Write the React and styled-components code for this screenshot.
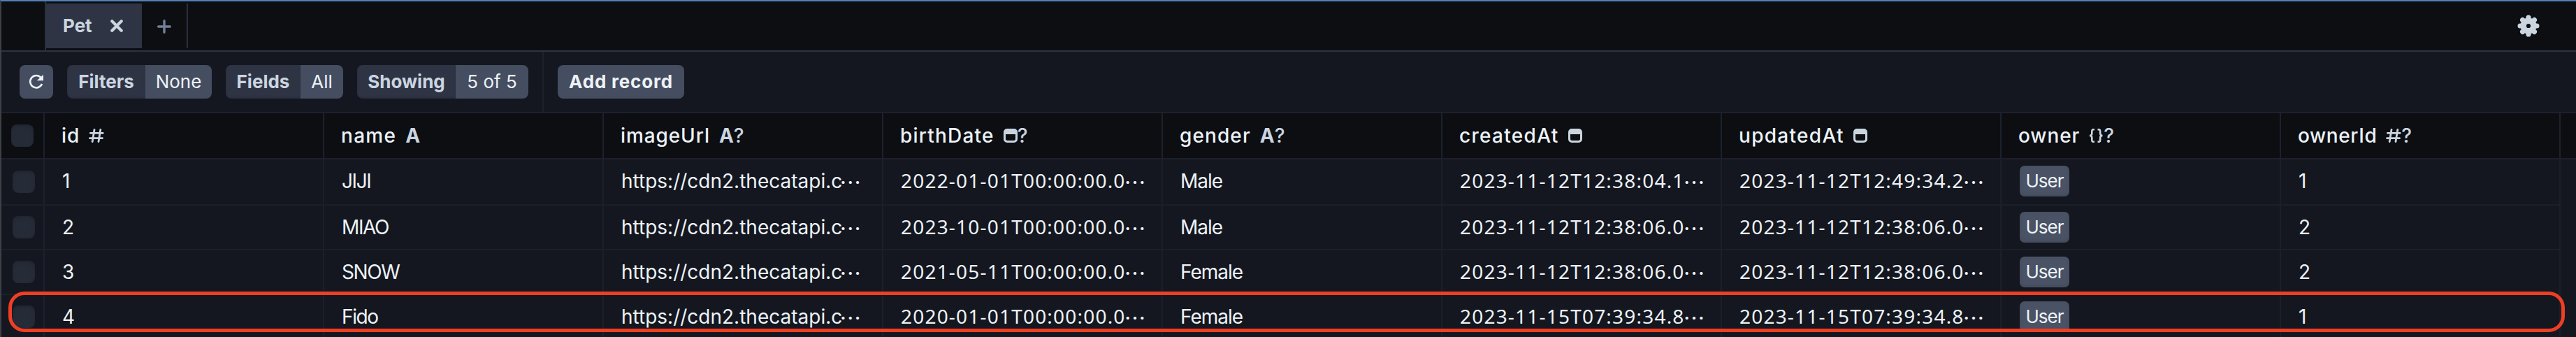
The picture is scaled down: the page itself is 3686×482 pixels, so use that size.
import React from "react";
import styled, { createGlobalStyle } from "styled-components";

const GlobalStyle = createGlobalStyle`
  * { box-sizing: border-box; }
  body { margin: 0; background: #14171f; overflow: hidden; }
`;

const Frame = styled.div`
  position: relative;
  width: 3686px;
  height: 482px;
  display: flex;
  flex-direction: column;
  overflow: hidden;
  background: #14171f;
  border-top: 2px solid #5580b8;
  border-left: 2px solid #3d4046;
  color: #edf2f7;
  font: 400 28px/1 Inter, "Noto Sans CJK JP", sans-serif;
  white-space: nowrap;
`;

const TabBar = styled.header`
  display: flex;
  flex: none;
  align-items: center;
  height: 72px;
  padding: 0 52px 0 62px;
  background: #0c0e12;
  border-bottom: 2px solid #2d3345;
`;

const TabList = styled.nav`
  display: flex;
  align-items: center;
  align-self: stretch;
  margin-right: auto;
  border-left: 2px solid #2b303e;
`;

const Tab = styled.div`
  display: flex;
  align-items: center;
  justify-content: space-between;
  width: 137px;
  height: 64px;
  padding: 0 27px 0 24px;
  background: #2e3444;
  color: #cbd5e0;
  font-size: 26px;
  font-weight: 700;
`;

const NewTab = styled.div`
  display: grid;
  place-items: center start;
  width: 66px;
  height: 64px;
  padding-left: 22px;
  padding-top: 2px;
  color: #718096;
  border-right: 2px solid #2b303e;
`;

const Toolbar = styled.div`
  display: flex;
  flex: none;
  height: 88px;
  border-bottom: 2px solid #1c212c;
`;

const ToolGroup = styled.div`
  display: flex;
  align-items: center;
  gap: 20px;
  padding: 0 20px 0 ${(p) => p.$inset || 20}px;
  border-right: ${(p) => (p.$divided ? "2px solid #1c212c" : "0")};
`;

const Button = styled.button`
  display: flex;
  align-items: center;
  justify-content: center;
  width: ${(p) => p.$width}px;
  height: 48px;
  padding: 0;
  border: 0;
  border-radius: 8px;
  background: #454d60;
  box-shadow: inset 0 -2px 3px rgba(74, 85, 104, 0.35);
  color: #edf2f7;
  font: 700 26px/1 Inter, sans-serif;
  letter-spacing: 0.8px;
`;

const Split = styled.div`
  display: flex;
  height: 48px;
  border-radius: 8px;
  overflow: hidden;
  font-size: 26px;
`;

const SplitLabel = styled.span`
  display: grid;
  place-items: center;
  width: ${(p) => p.$width}px;
  background: #2e3444;
  box-shadow: inset 0 -2px 3px rgba(26, 32, 44, 0.25);
  color: #cbd5e0;
  font-weight: 700;
`;

const SplitValue = styled.span`
  display: grid;
  place-items: center;
  width: ${(p) => p.$width}px;
  background: #454d60;
`;

const Table = styled.div`
  display: flex;
  flex-direction: column;
  flex: none;
`;

const HeaderRow = styled.div`
  display: flex;
  height: 66px;
  background: #0c0e12;
  border-bottom: 2px solid #1c212c;
`;

const BodyRow = styled.div`
  display: flex;
  width: 3662px;
  height: ${(p) => (p.$first ? 66 : 64)}px;
  border-bottom: 2px solid #1b1f2a;
`;

const CheckCell = styled.div`
  display: flex;
  flex: none;
  align-items: center;
  width: 62px;
  padding-left: ${(p) => p.$inset}px;
  border-right: 2px solid #1b202b;
`;

const Checkbox = styled.span`
  width: 32px;
  height: 32px;
  border-radius: 8px;
  background: #262b38;
  box-shadow: inset 0 2px 4px rgba(20, 23, 31, 0.35);
`;

const HeadCell = styled.div`
  display: flex;
  flex: none;
  align-items: center;
  gap: 13px;
  width: 400px;
  padding-left: 24px;
  border-right: 2px solid #1b222c;
  font-weight: 500;
`;

const HeadName = styled.span`
  letter-spacing: ${(p) => p.$track}px;
`;

const TypeMark = styled.span`
  display: flex;
  align-items: center;
  color: #cbd5e0;
`;

const Letter = styled.b`
  font-weight: 700;
`;

const Cell = styled.div`
  display: flex;
  flex: none;
  align-items: center;
  width: 400px;
  padding: 0 0 ${(p) => (p.$first ? 2 : 0)}px ${(p) => (p.$badge ? 26 : 25)}px;
  border-right: 2px solid #1b1f29;
`;

const CellText = styled.span`
  letter-spacing: ${(p) => p.$track}px;
`;

const DateText = styled.span`
  padding-bottom: 2px;
  font-family: "Noto Sans", sans-serif;
  letter-spacing: 1.200px;
`;

const Ellipsis = styled.span`
  width: 28px;
  margin-left: ${(p) => (p.$tight ? -4 : -2)}px;
  font: 400 31px/1 "Noto Sans CJK JP", sans-serif;
  line-height: 0;
`;

const Badge = styled.span`
  display: grid;
  place-items: center;
  width: 71px;
  height: 44px;
  border-radius: 7px;
  background: #4a5365;
  box-shadow: inset 0 -2px 4px rgba(60, 66, 80, 0.6);
  font-size: 26px;
  letter-spacing: -1px;
`;

const Highlight = styled.div`
  position: absolute;
  left: 10px;
  top: 415px;
  width: 3658px;
  height: 58px;
  border: 5px solid #ee3f24;
  border-radius: 23px;
`;

const HashIcon = () => (
  <svg width="22" height="20" viewBox="0 0 22 20" fill="none" stroke="currentColor" strokeWidth="2.8" strokeLinecap="round">
    <path d="M8 1.5 5.2 18.5M16.8 1.5 14 18.5M2.3 6.3h18M1.5 13.7h18" />
  </svg>
);

const CalendarIcon = () => (
  <svg width="20" height="20" viewBox="0 0 20 20">
    <path fill="currentColor" fillRule="evenodd" d="M5 0h10a5 5 0 0 1 5 5v10a5 5 0 0 1-5 5H5a5 5 0 0 1-5-5V5a5 5 0 0 1 5-5ZM3 8v6.5A2.5 2.5 0 0 0 5.500 17h9a2.500 2.500 0 0 0 2.500-2.500V8Z" />
  </svg>
);

const BracesIcon = () => (
  <svg width="21" height="20" viewBox="0 0 21 20" fill="none" stroke="currentColor" strokeWidth="2.600">
    <path d="M8 1.200H6.500Q4.300 1.200 4.300 3.500V7Q4.300 10 1 10 4.300 10 4.300 13v3.500Q4.300 18.800 6.500 18.800H8M12.500 1.200H14Q16.200 1.200 16.200 3.500V7Q16.200 10 19.500 10 16.200 10 16.200 13v3.500Q16.200 18.800 14 18.800H12.500" />
  </svg>
);

const CloseIcon = () => (
  <svg width="18" height="18" viewBox="0 0 18 18" stroke="currentColor" strokeWidth="4.200" strokeLinecap="round">
    <path d="M2.300 2.300 15.700 15.700M15.700 2.300 2.300 15.700" />
  </svg>
);

const PlusIcon = () => (
  <svg width="20" height="20" viewBox="0 0 20 20" stroke="currentColor" strokeWidth="3.400" strokeLinecap="round">
    <path d="M10 1.700V18.300M1.700 10H18.300" />
  </svg>
);

const RefreshIcon = () => (
  <svg width="22" height="22" viewBox="0 0 22 22" fill="none">
    <path d="M17.600 5.200A8.700 8.700 0 1 0 19 14" stroke="currentColor" strokeWidth="2.600" />
    <path d="M21 .800V9.200H11.800Z" fill="currentColor" />
  </svg>
);

const PETALS = [0, 45, 90, 135, 180, 225, 270, 315];

const GearIcon = () => (
  <svg width="32" height="32" viewBox="-16 -16 32 32" fill="#cbd5e0">
    <path fillRule="evenodd" d="M-11.500 0a11.500 11.500 0 1 0 23 0a11.500 11.500 0 1 0-23 0ZM-3.100 0a3.100 3.100 0 1 0 6.200 0a3.100 3.100 0 1 0-6.200 0Z" />
    {PETALS.map((angle) => (
      <rect key={angle} x="-3.600" y="-15.500" width="7.200" height="8" rx="3.600" transform={`rotate(${angle})`} />
    ))}
  </svg>
);

const MARKS = {
  number: <HashIcon />,
  string: <Letter>A</Letter>,
  date: <CalendarIcon />,
  object: <BracesIcon />,
};

const COLUMNS = [
  { name: "id", type: "number", track: 1 },
  { name: "name", type: "string", track: 1.3 },
  { name: "imageUrl", type: "string", optional: true, track: 0.9 },
  { name: "birthDate", type: "date", optional: true, track: 1.2 },
  { name: "gender", type: "string", optional: true, track: 1.1 },
  { name: "createdAt", type: "date", track: 1.3 },
  { name: "updatedAt", type: "date", track: 1.3 },
  { name: "owner", type: "object", optional: true, track: 0.9 },
  { name: "ownerId", type: "number", optional: true, track: 0.6 },
];

const URL_TEXT = "https://cdn2.thecatapi.c";

const ROWS = [
  ["1", "JIJI", URL_TEXT, "2022-01-01T00:00:00.0", "Male", "2023-11-12T12:38:04.1", "2023-11-12T12:49:34.2", "User", "1"],
  ["2", "MIAO", URL_TEXT, "2023-10-01T00:00:00.0", "Male", "2023-11-12T12:38:06.0", "2023-11-12T12:38:06.0", "User", "2"],
  ["3", "SNOW", URL_TEXT, "2021-05-11T00:00:00.0", "Female", "2023-11-12T12:38:06.0", "2023-11-12T12:38:06.0", "User", "2"],
  ["4", "Fido", URL_TEXT, "2020-01-01T00:00:00.0", "Female", "2023-11-15T07:39:34.8", "2023-11-15T07:39:34.8", "User", "1"],
];

const TRACKING = { name: -1.4, gender: -1 };

function CellContent({ column, children }) {
  if (column.type === "object") return <Badge>{children}</Badge>;
  if (column.type === "date") {
    return (
      <>
        <DateText>{children}</DateText>
        <Ellipsis>…</Ellipsis>
      </>
    );
  }
  return (
    <>
      <CellText $track={TRACKING[column.name] || 0}>{children}</CellText>
      {column.name === "imageUrl" && <Ellipsis $tight>…</Ellipsis>}
    </>
  );
}

function Summary({ label, value, widths }) {
  return (
    <Split>
      <SplitLabel $width={widths[0]}>{label}</SplitLabel>
      <SplitValue $width={widths[1]}>{value}</SplitValue>
    </Split>
  );
}

export default function App() {
  return (
    <Frame>
      <GlobalStyle />
      <TabBar>
        <TabList>
          <Tab>Pet <CloseIcon /></Tab>
          <NewTab><PlusIcon /></NewTab>
        </TabList>
        <GearIcon />
      </TabBar>
      <Toolbar>
        <ToolGroup $inset={26} $divided>
          <Button $width={48}><RefreshIcon /></Button>
          <Summary label="Filters" value="None" widths={[112, 95]} />
          <Summary label="Fields" value="All" widths={[107, 61]} />
          <Summary label="Showing" value="5 of 5" widths={[141, 104]} />
        </ToolGroup>
        <ToolGroup>
          <Button $width={181}>Add record</Button>
        </ToolGroup>
      </Toolbar>
      <Table>
        <HeaderRow>
          <CheckCell $inset={14}><Checkbox /></CheckCell>
          {COLUMNS.map((column) => (
            <HeadCell key={column.name}>
              <HeadName $track={column.track}>{column.name}</HeadName>
              <TypeMark>{MARKS[column.type]}{column.optional && "?"}</TypeMark>
            </HeadCell>
          ))}
        </HeaderRow>
        {ROWS.map((row, index) => (
          <BodyRow key={row[0]} $first={index === 0}>
            <CheckCell $inset={16}><Checkbox /></CheckCell>
            {row.map((value, i) => (
              <Cell key={COLUMNS[i].name} $first={index === 0} $badge={COLUMNS[i].type === "object"}>
                <CellContent column={COLUMNS[i]}>{value}</CellContent>
              </Cell>
            ))}
          </BodyRow>
        ))}
      </Table>
      <Highlight />
    </Frame>
  );
}
